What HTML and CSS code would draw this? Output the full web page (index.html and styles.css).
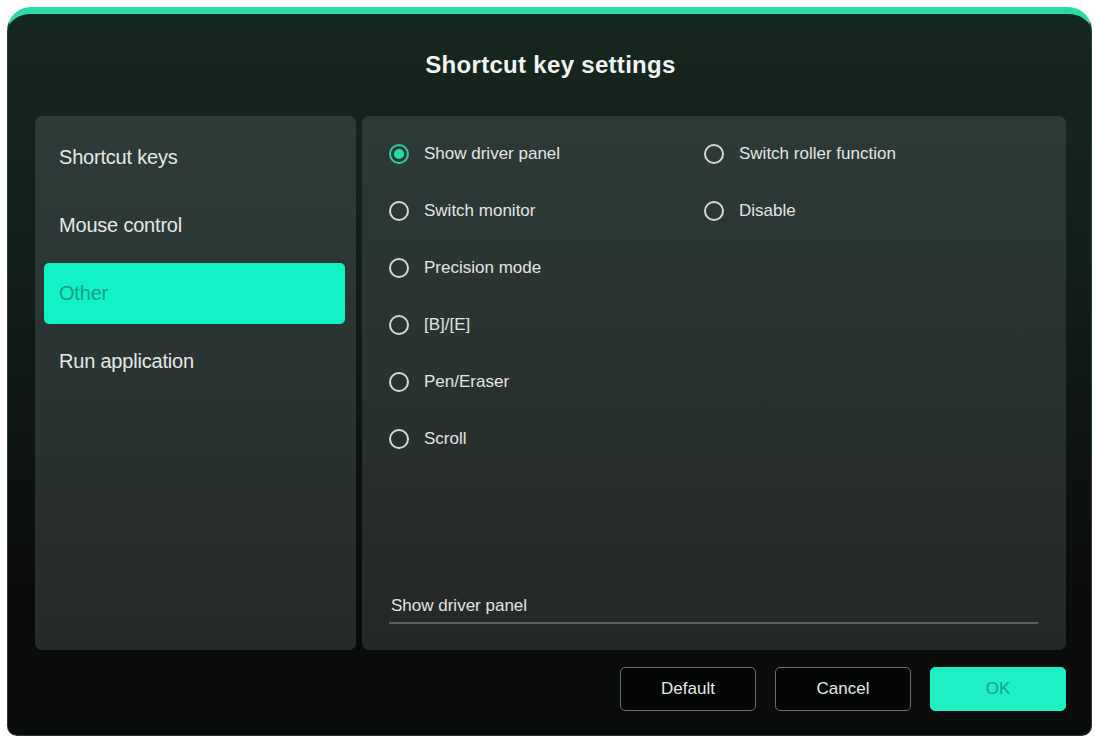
FILE: index.html
```html
<!DOCTYPE html>
<html lang="en">
<head>
<meta charset="utf-8">
<title>Shortcut key settings</title>
<link rel="stylesheet" href="styles.css">
</head>
<body>
<div class="window">
  <div class="title-bar"><h1 class="title">Shortcut key settings</h1></div>
  <div class="content">
    <nav class="side">
      <div class="side-item">Shortcut keys</div>
      <div class="side-item">Mouse control</div>
      <div class="side-item active">Other</div>
      <div class="side-item">Run application</div>
    </nav>
    <section class="main">
      <div class="options">
        <div class="col">
          <label class="opt"><span class="radio checked"></span>Show driver panel</label>
          <label class="opt"><span class="radio"></span>Switch monitor</label>
          <label class="opt"><span class="radio"></span>Precision mode</label>
          <label class="opt"><span class="radio"></span>[B]/[E]</label>
          <label class="opt"><span class="radio"></span>Pen/Eraser</label>
          <label class="opt"><span class="radio"></span>Scroll</label>
        </div>
        <div class="col">
          <label class="opt"><span class="radio"></span>Switch roller function</label>
          <label class="opt"><span class="radio"></span>Disable</label>
        </div>
      </div>
      <div class="field">Show driver panel</div>
    </section>
  </div>
  <div class="footer">
    <button class="btn">Default</button>
    <button class="btn">Cancel</button>
    <button class="btn primary">OK</button>
  </div>
</div>
</body>
</html>
```
FILE: styles.css
```css
* { box-sizing: border-box; }
html, body { margin: 0; padding: 0; background: #ffffff; }
body {
  font-family: "Liberation Sans", Arial, sans-serif;
  padding: 7px 3px 1px 7px;
}
.window {
  width: 1085px;
  height: 729px;
  border-radius: 24px 24px 10px 10px;
  border-top: 7px solid #27dca6;
  border-left: 1px solid #2a3a35;
  border-right: 1px solid #2a3a35;
  border-bottom: 1px solid #2a3a35;
  background: linear-gradient(180deg, #16271f 0%, #132019 30%, #0e1412 60%, #0a0b0b 85%, #0a0b0b 100%);
  display: flex;
  flex-direction: column;
  padding: 0 25px 24px 27px;
}
.title-bar {
  height: 102px;
  display: flex;
  align-items: center;
  justify-content: center;
  padding-bottom: 0;
}
.title {
  margin: 0;
  font-size: 24px;
  font-weight: bold;
  color: #f2f4f3;
  letter-spacing: 0.3px;
}
.content {
  display: flex;
  gap: 6px;
  height: 534px;
}
.side {
  width: 321px;
  border-radius: 7px;
  background: linear-gradient(180deg, #2d3b38 0%, #2a3432 50%, #262a2a 100%);
  padding: 11px 11px 0 9px;
  display: flex;
  flex-direction: column;
  gap: 7px;
}
.side-item {
  height: 61px;
  display: flex;
  align-items: center;
  padding-left: 15px;
  font-size: 20px;
  letter-spacing: -0.2px;
  color: #e6e8e7;
  border-radius: 5px;
}
.side-item.active {
  background: #12f2c4;
  color: #15a082;
}
.main {
  flex: 1;
  border-radius: 7px;
  background: linear-gradient(180deg, #2c3a37 0%, #293330 45%, #252828 100%);
  padding: 26px 28px 26px 27px;
  display: flex;
  flex-direction: column;
}
.options {
  flex: 1;
  display: grid;
  grid-template-columns: 315px auto;
}
.col {
  display: flex;
  flex-direction: column;
  gap: 33px;
}
.opt {
  height: 24px;
  display: flex;
  align-items: center;
  gap: 15px;
  font-size: 17px;
  color: #e2e4e3;
}
.radio {
  width: 20px;
  height: 20px;
  border-radius: 50%;
  border: 2px solid #d6d8d7;
  flex: none;
  display: flex;
  align-items: center;
  justify-content: center;
}
.radio.checked {
  border-color: #2bcf9e;
}
.radio.checked::after {
  content: "";
  width: 10px;
  height: 10px;
  border-radius: 50%;
  background: #22e0ab;
}
.field {
  font-size: 17px;
  color: #e2e4e3;
  padding: 0 0 6px 2px;
  border-bottom: 2px solid #5a5e5d;
}
.footer {
  display: flex;
  justify-content: flex-end;
  gap: 19px;
  padding-top: 17px;
}
.btn {
  width: 136px;
  height: 44px;
  border-radius: 5px;
  border: 1px solid #6b6e6e;
  background: #040505;
  color: #e6e8e7;
  font-family: "Liberation Sans", Arial, sans-serif;
  font-size: 17px;
  padding: 0;
}
.btn.primary {
  background: #1ff0c3;
  border-color: #1ff0c3;
  color: #17a385;
}
```
